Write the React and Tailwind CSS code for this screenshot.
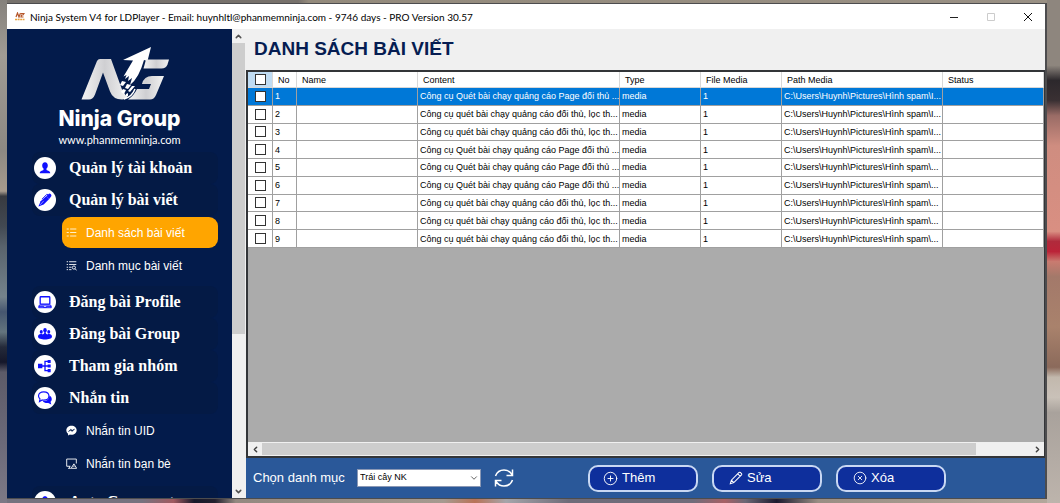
import React from "react";
import { ChevronDown, ChevronLeft, ChevronRight, ChevronUp, CirclePlus, CircleX } from "lucide-react";

function LogoMark() {
  return (
    <svg viewBox="80 45 92 57" className="h-[57px] w-[92px]" aria-hidden="true">
      <defs>
        <linearGradient id="silver" x1="0" x2="1">
          <stop offset="0" stopColor="#f4f4f4" />
          <stop offset="0.5" stopColor="#cfcfd2" />
          <stop offset="1" stopColor="#f2f2f2" />
        </linearGradient>
      </defs>
      <path d="M81.5 99.5 97 61q1-2 3-2h11l9 25q3 10 8 13-2 2.500-6 2.500-9 0-12-8l-7-19-8 22q-2 5-6 5z" fill="url(#silver)" />
      <path d="M151 47 123 60l10 .5-9.500 16 3-1.500-1.500 4 4-3-1 5 4-3-2 7q9-7 14-25l3.500 1z" fill="#fff" />
      <path d="m122 81 4 1-3 4-3-1zM127 84l4 1-3 4-3-1zM132 86l3 0-5 6-2-1zM123 89l3 1-2 4-3-2zM126 94l2-1 0 3-2 0z" fill="#fff" />
      <path d="M146 59.500h23l-1.500 5q-1.500 4-6 4h-18z" fill="url(#silver)" />
      <path d="M152 76h12l-8 19q-2 4.500-6 4.500h-22q6-4 9-10.500h12l2-5h-9q2-8 10-8z" fill="url(#silver)" />
      <path d="M124 99q8-2 11-10" fill="none" stroke="#fff" strokeWidth="1.500" />
    </svg>
  );
}

const glyphs = {
  user: <path d="M8 1.500c2 0 3.200 1.500 3.200 3.700C11.200 7 10.500 8 9.700 8.700v1.500c1.500.8 4.300 1 4.300 3.800H2c0-2.800 2.800-3 4.300-3.800V8.700C5.500 8 4.800 7 4.800 5.200 4.800 3 6 1.500 8 1.500z" fill="currentColor" />,
  pen: (
    <g fill="currentColor">
      <path d="M.5 15.500 3 9.500 9.500 3.500l3.300 3.300L6.500 13z" />
      <path d="M9.500 3.500 12.500.8q1-.6 2 .4t.8 2.300l-2.500 3.300z" />
      <path d="M4.500 7 10 1.500l1.500.3" fill="none" stroke="currentColor" strokeWidth="1" />
      <path d="m2.500 13.500 4-4.500" stroke="#fff" strokeWidth=".6" />
    </g>
  ),
  laptop: (
    <g fill="none" stroke="currentColor" strokeWidth="1.500">
      <rect x="2.500" y="2" width="11" height="8.500" rx=".8" />
      <path d="M.8 13h5.500v1h3.500v-1h5.500M1.500 11.500h13l.7 3H.8z" strokeWidth="1.100" />
    </g>
  ),
  group: (
    <g fill="currentColor">
      <ellipse cx="3.700" cy="5.500" rx="1.700" ry="2.200" />
      <ellipse cx="12.300" cy="5.500" rx="1.700" ry="2.200" />
      <ellipse cx="8" cy="3.800" rx="2" ry="2.600" />
      <path d="M0 11c0-2 1.500-2.500 3-3h1.500l1 .5L7 7.500V6h2v1.500l1.500 1 1-.5H13c1.500.5 3 1 3 3 0 2-4 3.200-8 3.200S0 13 0 11z" />
    </g>
  ),
  tree: (
    <g fill="currentColor">
      <path d="M0 5.500h5v5H0zM11 1h3.500v3.500H11zM11 6.300h3.500v3.500H11zM11 11.500h3.500V15H11z" />
      <path d="M4 8h8M12 2.700H8v10.600h4" fill="none" stroke="currentColor" strokeWidth="1.500" />
    </g>
  ),
  chat: (
    <g>
      <path d="M13 5c2 1 3 3 2.700 5-.2 1-.7 1.800-1.400 2.400l.9 3-3.500-1.700c-2.700.4-5.200-.5-6.200-2.300C10 12 13 9.500 13 5z" fill="currentColor" />
      <path d="M6.500 1c3.400 0 6 1.900 6 4.700s-2.600 4.700-6 4.700c-.6 0-1.200 0-1.700-.2L1.700 12l.6-3C1.200 8 .6 7 .6 5.700.6 2.900 3.100 1 6.500 1z" fill="#fff" stroke="currentColor" strokeWidth="1.300" />
    </g>
  ),
  list: <path d="M1 3h3M1 8h3M1 13h3M6 3h9M6 8h9M6 13h9" fill="none" stroke="currentColor" strokeWidth="1.500" />,
  listSearch: (
    <g fill="none" stroke="currentColor" strokeWidth="1.300">
      <path d="M1 2.500h2M1 6.500h2M1 10.500h2M1 14h2M4.500 2.500H15M4.500 6.500H15M4.500 10.500H8M4.500 14H8" />
      <circle cx="11.500" cy="11" r="2.300" />
      <path d="m13.200 12.700 2.300 2.500" />
    </g>
  ),
  messenger: (
    <g>
      <path d="M8 1c4.300 0 7.500 2.900 7.500 6.600S12.300 14.200 8 14.200c-.8 0-1.500-.1-2.200-.3L3 15.300v-2.700C1.400 11.400.5 9.700.5 7.600.5 3.900 3.700 1 8 1z" fill="currentColor" />
      <path d="M3.500 9.500 7 6l2 1.800 3.500-2L9 9.400 7 7.700z" fill="#031b4b" stroke="#031b4b" strokeWidth=".7" />
    </g>
  ),
  screenAlert: (
    <g fill="none" stroke="currentColor" strokeWidth="1.300">
      <path d="M6.500 12H1V1.500h14V8M5 12v2.500M3 15h4" />
      <path d="M11.500 8.500 15.500 15h-8zM11.500 11v2" />
    </g>
  ),
};

function Glyph({ name, className }) {
  return (
    <svg viewBox="0 0 16 16" className={className} aria-hidden="true">
      {glyphs[name]}
    </svg>
  );
}

const menu = [
  { icon: "user", label: "Quản lý tài khoản" },
  {
    icon: "pen",
    label: "Quản lý bài viết",
    items: [
      { icon: "list", label: "Danh sách bài viết", active: true },
      { icon: "listSearch", label: "Danh mục bài viết" },
    ],
  },
  { icon: "laptop", label: "Đăng bài Profile" },
  { icon: "group", label: "Đăng bài Group" },
  { icon: "tree", label: "Tham gia nhóm" },
  {
    icon: "chat",
    label: "Nhắn tin",
    items: [
      { icon: "messenger", label: "Nhắn tin UID" },
      { icon: "screenAlert", label: "Nhắn tin bạn bè" },
    ],
  },
  { icon: "user", label: "Auto Comment" },
];

function Sidebar() {
  return (
    <aside className="flex min-h-0 w-[225px] shrink-0 flex-col overflow-hidden bg-[#031b4b] text-white">
      <div className="flex shrink-0 flex-col items-center pt-4">
        <div className="pl-3">
          <LogoMark />
        </div>
        <p className="pt-1 font-['Inter',sans-serif] text-[21px] leading-[26px] font-extrabold">Ninja Group</p>
        <p className="font-['Lato',sans-serif] text-[11px] leading-4">www.phanmemninja.com</p>
      </div>
      <nav className="flex shrink-0 flex-col pt-1 pr-[14px] pl-[25px]">
        {menu.map((m) => (
          <div key={m.label} className="last:pt-[2px]">
            <button className="flex h-8 w-full items-center gap-[13px] rounded-lg bg-[#041a45] pl-[2px] text-left">
              <span className="flex size-[22px] shrink-0 items-center justify-center rounded-full bg-white text-[#1010ff]">
                <Glyph name={m.icon} className="size-[14px]" />
              </span>
              <span className="font-['Liberation_Serif',serif] text-[16px] leading-5 font-bold">{m.label}</span>
            </button>
            {m.items && (
              <div className="pb-1">
                {m.items.map((s) => (
                  <div key={s.label} className="flex h-[33px] items-center pl-[30px]">
                    <button
                      className={
                        "flex h-[31px] w-full items-center gap-[9px] rounded-[9px] pl-1 text-left font-['Liberation_Sans',sans-serif] text-[12px] leading-4 " +
                        (s.active ? "bg-[#ffa500]" : "")
                      }
                    >
                      <Glyph name={s.icon} className={s.active ? "size-[11px] text-[#fff0cc]" : "size-[11px]"} />
                      {s.label}
                    </button>
                  </div>
                ))}
              </div>
            )}
          </div>
        ))}
      </nav>
    </aside>
  );
}

const pageText = "Công cụ Quét bài chạy quảng cáo Page đối thủ ...";
const filterText = "Công cụ quét bài chạy quảng cáo đối thủ, lọc th...";
const longPath = "C:\\Users\\Huynh\\Pictures\\Hình spam\\I...";
const shortPath = "C:\\Users\\Huynh\\Pictures\\Hình spam\\...";
const rows = [
  [pageText, longPath],
  [filterText, longPath],
  [filterText, longPath],
  [pageText, longPath],
  [pageText, shortPath],
  [pageText, shortPath],
  [filterText, shortPath],
  [filterText, shortPath],
  [filterText, shortPath],
];
const headers = ["No", "Name", "Content", "Type", "File Media", "Path Media", "Status"];

function Tick({ label }) {
  return (
    <input
      type="checkbox"
      aria-label={label}
      className="mx-auto block size-[11px] appearance-none border border-[#333] bg-white checked:bg-[#0078d7]"
    />
  );
}

function PostTable() {
  return (
    <table className="h-[176px] w-full table-fixed border-separate border-spacing-0 bg-white font-['Liberation_Sans',sans-serif] text-[9px] leading-3 text-black">
      <colgroup>
        <col className="w-[25px]" />
        <col className="w-6" />
        <col className="w-[121px]" />
        <col className="w-[202px]" />
        <col className="w-[81px]" />
        <col className="w-[81px]" />
        <col className="w-[161px]" />
        <col />
      </colgroup>
      <thead>
        <tr>
          <th className="h-4 border-r border-b border-[#d8d8d8] bg-[#c0dcf3] p-0">
            <Tick label="Chọn tất cả" />
          </th>
          {headers.map((h) => (
            <th key={h} className="h-4 border-r border-b border-[#d8d8d8] p-0 pl-[5px] text-left font-normal whitespace-nowrap">
              {h}
            </th>
          ))}
        </tr>
      </thead>
      <tbody>
        {rows.map(([content, path], i) => (
          <tr key={i} className={i === 0 ? "bg-[#0078d7] text-white" : ""}>
            <td className="border-r border-b border-[#a0a0a0] p-0">
              <Tick label={"Chọn dòng " + (i + 1)} />
            </td>
            {[i + 1, "", content, "media", "1", path, ""].map((v, c) => (
              <td key={c} className="border-r border-b border-[#a0a0a0] p-0 pl-[2px] whitespace-nowrap">
                {v}
              </td>
            ))}
          </tr>
        ))}
      </tbody>
    </table>
  );
}

function ActionButton({ icon, children }) {
  return (
    <button className="flex h-[27px] w-[110px] items-center gap-1 rounded-[10px] border-2 border-[#c9d8f3] bg-[#0e2f9c] pl-[13px] text-[13px] leading-4 text-white">
      {icon}
      {children}
    </button>
  );
}

function Footer() {
  return (
    <footer className="flex h-10 shrink-0 items-center bg-[#2a5899] pl-[7px] font-['Liberation_Sans',sans-serif] text-white">
      <label htmlFor="category" className="w-[104px] text-[13px] leading-4">
        Chọn danh mục
      </label>
      <span className="grid w-[124px] items-center">
        <select
          id="category"
          className="col-start-1 row-start-1 h-[18px] appearance-none rounded-none border border-[#8a98b5] bg-white pl-[2px] font-['Liberation_Sans',sans-serif] text-[9px] text-black"
        >
          <option>Trái cây NK</option>
        </select>
        <ChevronDown className="pointer-events-none col-start-1 row-start-1 mr-[2px] size-[10px] justify-self-end text-[#444]" />
      </span>
      <button aria-label="Làm mới" className="ml-[13px]">
        <svg viewBox="0 0 20 20" className="size-5" fill="none" stroke="#fff" strokeWidth="1.500" aria-hidden="true">
          <path d="M1.500 8C3 4 6 2 10 2c3.500 0 6 1.500 8 4.500M18.500 1.500v6h-6M18.500 12c-1.500 4-4.500 6-8.500 6-3.500 0-6-1.500-8-4.500M1.500 18.500v-6h6" />
        </svg>
      </button>
      <div className="ml-[74px] flex gap-[14px]">
        <ActionButton icon={<CirclePlus className="size-[15px]" strokeWidth={1.5} />}>Thêm</ActionButton>
        <ActionButton
          icon={
            <svg viewBox="0 0 16 16" className="ml-[2px] size-[14px]" fill="none" stroke="currentColor" strokeWidth="1.200" aria-hidden="true">
              <path d="m1.500 14.500 1.200-4L11.500 1.700q.7-.6 1.400 0l1.400 1.400q.6.700 0 1.400L5.500 13.300zM10 3.200 12.800 6M2.700 10.500l2.800 2.800" />
            </svg>
          }
        >
          Sửa
        </ActionButton>
        <ActionButton icon={<CircleX className="ml-[2px] size-[14px]" strokeWidth={1.5} />}>Xóa</ActionButton>
      </div>
    </footer>
  );
}

function TitleBar() {
  return (
    <header className="flex h-[25px] shrink-0 items-center bg-white pl-2 text-black">
      <svg viewBox="0 0 10 9" className="h-[9px] w-[10px]" aria-hidden="true">
        <path d="M1 5 2.500 1l1.500 4 1.500-4M6 1.500h3L8 3H6.500L6 5h2.500" fill="none" stroke="#b5562a" strokeWidth="1.200" />
        <path d="M0 7.500h9.500" stroke="#e8a23c" strokeWidth="1.300" strokeDasharray="2 .6" />
      </svg>
      <h1 className="ml-[5px] font-['Lato',sans-serif] text-[10px] leading-4">
        Ninja System V4 for LDPlayer - Email: huynhltl@phanmemninja.com - 9746 days - PRO Version 30.57
      </h1>
      <div className="ml-auto flex items-center gap-[27px] pr-3">
        <button aria-label="Thu nhỏ">
          <svg viewBox="0 0 10 10" className="size-[10px]" stroke="#222" fill="none"><path d="M1 5.500h8" /></svg>
        </button>
        <button aria-label="Phóng to">
          <svg viewBox="0 0 10 10" className="size-[10px]" stroke="#ccc" fill="none"><path d="M1.500 1.500h7v7h-7z" /></svg>
        </button>
        <button aria-label="Đóng">
          <svg viewBox="0 0 10 10" className="size-[10px]" stroke="#111" fill="none"><path d="m1 1 8 8M9 1 1 9" /></svg>
        </button>
      </div>
    </header>
  );
}

export default function App() {
  return (
    <div className="flex h-screen bg-[linear-gradient(90deg,#8e8981_0%,#8a8178_20%,#8e877c_60%,#8e867f_100%)]">
      <div className="w-[7px] shrink-0 bg-[linear-gradient(180deg,#85817c_0%,#a09b94_11%,#8d8983_30%,#a79b8d_38%,#383a40_39%,#424952_45%,#59636c_49%,#75838c_59%,#46566f_62%,#64757e_66%,#242a3a_69%,#15172a_72%,#5d5b68_74%,#6c6a79_88%,#7d7986_100%)]" />
      <div className="flex min-w-0 flex-1 flex-col">
        <div className="h-[3px] shrink-0 bg-[linear-gradient(90deg,#76716c_0%,#77716b_28%,#938a7c_29%,#999084_100%)]" />
        <main className="flex min-h-0 flex-1 flex-col border-t border-r-2 border-b border-[#4c4c4e] bg-[#f0f0f0]">
          <TitleBar />
          <div className="flex min-h-0 flex-1">
            <Sidebar />
            <div className="flex w-[14px] shrink-0 flex-col bg-[#f0f0f0] pr-[1px] text-[#505050]">
              <button aria-label="Cuộn lên" className="flex h-[14px] items-center justify-center">
                <ChevronUp className="size-[9px]" strokeWidth={4} />
              </button>
              <div className="flex min-h-0 flex-1 flex-col">
                <div className="h-[66%] bg-[#cdcdcd]" />
              </div>
              <button aria-label="Cuộn xuống" className="flex h-[14px] items-center justify-center">
                <ChevronDown className="size-[9px]" strokeWidth={4} />
              </button>
            </div>
            <section className="flex min-w-0 flex-1 flex-col">
              <h2 className="h-[41px] shrink-0 bg-[#f0f0f0] pt-2 pl-2 font-['Liberation_Sans',sans-serif] text-[19px] leading-6 font-bold text-[#061d52]">
                DANH SÁCH BÀI VIẾT
              </h2>
              <div className="flex min-h-0 flex-1 flex-col overflow-hidden border-t-2 border-r border-b-2 border-l-2 border-[#333538] bg-[#ababab]">
                <PostTable />
                <div className="mt-auto flex h-[14px] shrink-0 items-center bg-[#f0f0f0] text-[#404040]">
                  <button aria-label="Cuộn trái" className="flex w-[14px] justify-center">
                    <ChevronLeft className="size-[9px]" strokeWidth={4} />
                  </button>
                  <div className="flex flex-1">
                    <div className="h-3 w-[93%] bg-[#cdcdcd]" />
                  </div>
                  <button aria-label="Cuộn phải" className="flex w-[14px] justify-center">
                    <ChevronRight className="size-[9px]" strokeWidth={4} />
                  </button>
                </div>
              </div>
              <Footer />
            </section>
          </div>
        </main>
        <div className="h-1 shrink-0 bg-[linear-gradient(90deg,#75727f_0%,#77727f_13%,#a05a60_16%,#17182a_18%,#23202e_20%,#948980_22%,#a59a90_42%,#b87358_45%,#a5a5aa_48%,#6e6c79_54%,#706c7a_66%,#a76065_69%,#6b6775_71%,#1c1b30_74%,#998e84_78%,#b3a79b_100%)]" />
      </div>
      <div className="w-[13px] shrink-0 bg-[linear-gradient(180deg,#8e867e_0%,#8e867e_13%,#2c282c_16%,#3a3033_20%,#9a6c66_23%,#cf8d80_29%,#d98f82_46%,#b02a3c_48%,#bb2438_50%,#c97b70_52%,#a3796a_55%,#a9826c_65%,#8b6a5b_73%,#c2b8ad_75%,#c9c1b8_79%,#a9a29c_82%,#bdb4ac_100%)]" />
    </div>
  );
}
